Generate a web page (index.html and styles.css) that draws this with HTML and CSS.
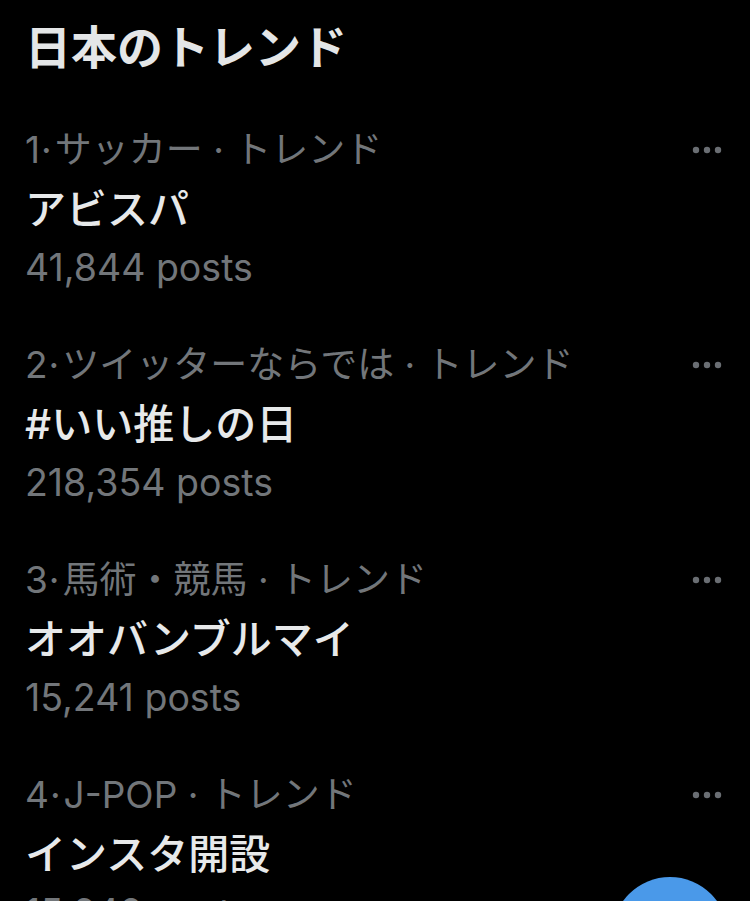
FILE: index.html
```html
<!DOCTYPE html>
<html lang="ja">
<head>
    <meta charset="UTF-8">
    <meta name="viewport" content="width=device-width, initial-scale=1.0">
    <title>日本のトレンド</title>
    <link rel="stylesheet" href="styles.css">
</head>
<body>
    <div class="container">
        <h1>日本のトレンド</h1>

        <div class="trend">
            <div class="trend-body">
                <p class="meta">1<span class="dot">·</span>サッカー · トレンド</p>
                <p class="name">アビスパ</p>
                <p class="count">41,844 posts</p>
            </div>
            <svg class="more" width="30" height="8" viewBox="0 0 30 8"><circle cx="4" cy="4" r="3.2"/><circle cx="15" cy="4" r="3.2"/><circle cx="26" cy="4" r="3.2"/></svg>
        </div>

        <div class="trend">
            <div class="trend-body">
                <p class="meta">2<span class="dot">·</span>ツイッターならでは · トレンド</p>
                <p class="name">#いい推しの日</p>
                <p class="count">218,354 posts</p>
            </div>
            <svg class="more" width="30" height="8" viewBox="0 0 30 8"><circle cx="4" cy="4" r="3.2"/><circle cx="15" cy="4" r="3.2"/><circle cx="26" cy="4" r="3.2"/></svg>
        </div>

        <div class="trend">
            <div class="trend-body">
                <p class="meta">3<span class="dot">·</span>馬術・競馬 · トレンド</p>
                <p class="name">オオバンブルマイ</p>
                <p class="count">15,241 posts</p>
            </div>
            <svg class="more" width="30" height="8" viewBox="0 0 30 8"><circle cx="4" cy="4" r="3.2"/><circle cx="15" cy="4" r="3.2"/><circle cx="26" cy="4" r="3.2"/></svg>
        </div>

        <div class="trend">
            <div class="trend-body">
                <p class="meta">4<span class="dot">·</span>J-POP · トレンド</p>
                <p class="name">インスタ開設</p>
                <p class="count">15,640 posts</p>
            </div>
            <svg class="more" width="30" height="8" viewBox="0 0 30 8"><circle cx="4" cy="4" r="3.2"/><circle cx="15" cy="4" r="3.2"/><circle cx="26" cy="4" r="3.2"/></svg>
        </div>
    </div>

    <div class="fab"></div>
</body>
</html>
```

FILE: styles.css
```css
html, body {
    margin: 0;
    padding: 0;
    background-color: #000;
    height: 901px;
    overflow: hidden;
}
body {
    font-family: Inter, "Noto Sans CJK JP", sans-serif;
    position: relative;
}
.container {
    padding: 17px 28px 0 25px;
}
h1 {
    font-size: 46px;
    font-weight: 700;
    line-height: 60px;
    color: #e4e6e7;
    margin: 0 0 44px;
}
.trend {
    display: flex;
    justify-content: space-between;
    align-items: flex-start;
    margin-bottom: 39px;
}
.trend p {
    margin: 0;
}
.meta {
    font-size: 37px;
    line-height: 58px;
    color: #72767a;
}
.dot {
    margin: 0 3px 0 1px;
}
.name {
    font-size: 41px;
    font-weight: 500;
    line-height: 60px;
    color: #e7e9ea;
}
.count {
    font-size: 37.5px;
    line-height: 58px;
    color: #72767a;
}
.more {
    fill: #6a6e73;
    margin-top: 25px;
}
.fab {
    position: absolute;
    left: 612px;
    top: 877px;
    width: 116px;
    height: 116px;
    border-radius: 50%;
    background-color: #4a99e9;
}
```
